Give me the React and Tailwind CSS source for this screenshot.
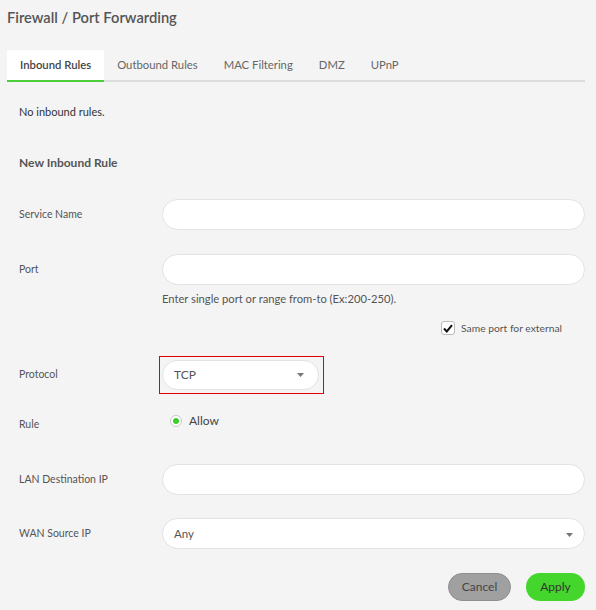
import { useState } from "react";

const tabs = ["Inbound Rules", "Outbound Rules", "MAC Filtering", "DMZ", "UPnP"];

function Caret({ className }) {
  return (
    <svg width="7" height="4" viewBox="0 0 7 4" className={className}>
      <path d="M0 0 L7 0 L3.5 4 Z" fill="#777" />
    </svg>
  );
}

function Field({ label, children }) {
  return (
    <div className="flex items-center">
      <div className="w-[143px] shrink-0 text-[10.5px] text-[#555]">{label}</div>
      {children}
    </div>
  );
}

function TextInput() {
  return (
    <input
      type="text"
      className="h-[31px] flex-1 rounded-full border border-[#e2e2e2] bg-white px-3 text-[12px] outline-none"
    />
  );
}

export default function App() {
  const [active, setActive] = useState(0);
  const [same, setSame] = useState(true);

  return (
    <div
      className="h-[610px] w-full bg-[#f4f4f4] pl-[7px] pr-[11px]"
      style={{ fontFamily: "Lato, 'Open Sans', sans-serif" }}
    >
      <div className="pt-[7px] text-[14.7px] leading-[20px] font-semibold text-[#555]">
        Firewall / Port Forwarding
      </div>

      <div className="mt-[23px] flex border-b-2 border-[#dcdcdc]">
        {tabs.map((t, i) => (
          <button
            key={t}
            onClick={() => setActive(i)}
            className={
              i === active
                ? "-mb-[2px] flex h-[32px] items-center border-b-2 border-[#4ccd3a] bg-white px-[13px] text-[11.3px] font-semibold text-[#444]"
                : "flex h-[30px] items-center px-[13px] text-[11.3px] text-[#666]"
            }
          >
            {t}
          </button>
        ))}
      </div>

      <div className="pl-[12px]">
        <div className="mt-[22px] text-[11px] leading-[16px] text-[#333]">No inbound rules.</div>
        <div className="mt-[35px] text-[12px] leading-[16px] font-bold text-[#555]">New Inbound Rule</div>

        <div className="mt-[28px]">
          <Field label="Service Name">
            <TextInput />
          </Field>
        </div>

        <div className="mt-[24px]">
          <Field label="Port">
            <TextInput />
          </Field>
        </div>

        <div className="mt-[6px] pl-[143px] text-[11.2px] leading-[16px] text-[#555]">
          Enter single port or range from-to (Ex:200-250).
        </div>

        <div className="mt-[13px] flex items-center justify-end pr-[23px]">
          <button
            onClick={() => setSame(!same)}
            className="flex h-[14px] w-[14px] items-center justify-center rounded-[3px] border border-[#bbb] bg-white"
          >
            {same && (
              <svg width="10" height="9" viewBox="0 0 10 9">
                <path d="M1 4.5 L3.8 7.5 L9 1.2" fill="none" stroke="#111" strokeWidth="2" />
              </svg>
            )}
          </button>
          <span className="ml-[6px] text-[10.3px] leading-[16px] text-[#555]">Same port for external</span>
        </div>

        <div className="mt-[20px]">
          <Field label="Protocol">
            <div className="-ml-[3px] border border-[#e00000] py-[3px] pl-[2px] pr-[4px]">
              <div className="flex h-[30px] w-[157px] items-center justify-between rounded-full border border-[#e2e2e2] bg-white pl-[11px] pr-[14px] text-[12px] text-[#555]">
                TCP
                <Caret />
              </div>
            </div>
          </Field>
        </div>

        <div className="mt-[19px] flex items-start">
          <div className="mt-[3px] w-[143px] shrink-0 text-[10.5px] leading-[16px] text-[#555]">Rule</div>
          <div className="flex h-[16px] items-center pl-[8px]">
            <span className="flex h-[12px] w-[12px] items-center justify-center rounded-full border border-[#c8c8c8] bg-white">
              <span className="h-[6px] w-[6px] rounded-full bg-[#3ccf2a]" />
            </span>
            <span className="ml-[7px] text-[12px] text-[#444]">Allow</span>
          </div>
        </div>

        <div className="mt-[32px]">
          <Field label="LAN Destination IP">
            <TextInput />
          </Field>
        </div>

        <div className="mt-[23px]">
          <Field label="WAN Source IP">
            <div className="flex h-[31px] flex-1 items-center justify-between rounded-full border border-[#e2e2e2] bg-white pl-[11px] pr-[11px] text-[11.5px] text-[#555]">
              Any
              <Caret className="mt-[3px]" />
            </div>
          </Field>
        </div>

        <div className="mt-[24px] flex justify-end gap-[15px]">
          <button className="h-[28px] w-[63px] rounded-full border border-[#8f8f8f] bg-[#a0a0a0] text-[12px] text-[#444]">
            Cancel
          </button>
          <button className="h-[28px] w-[59px] rounded-full bg-[#44d62c] text-[12px] text-[#333]">
            Apply
          </button>
        </div>
      </div>
    </div>
  );
}
